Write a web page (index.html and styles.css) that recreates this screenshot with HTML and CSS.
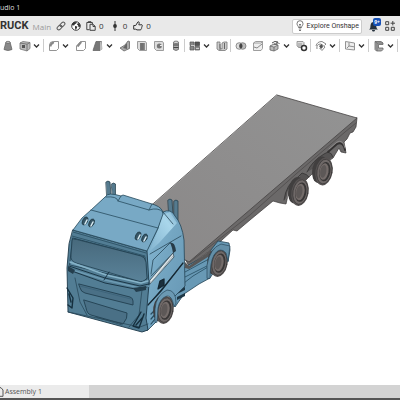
FILE: index.html
```
<!DOCTYPE html>
<html lang="en">
<head>
<meta charset="utf-8">
<title>Part Studio 1</title>
<link rel="stylesheet" href="styles.css">
</head>
<body>
<svg class="defs" aria-hidden="true">
  <defs>
    <symbol id="caret" viewBox="0 0 7 12"><path d="M1 4.500 3.500 7 6 4.500" fill="none" stroke="#333" stroke-width="1.300"/></symbol>
    <linearGradient id="deck" x1="0" y1="1" x2="1" y2="0"><stop offset="0" stop-color="#8a8888"/><stop offset="1" stop-color="#939393"/></linearGradient>
    <linearGradient id="side" x1="0" y1="0" x2="1" y2="1"><stop offset="0" stop-color="#8cbdd8"/><stop offset=".45" stop-color="#74a6c2"/><stop offset="1" stop-color="#6595b2"/></linearGradient>
    <linearGradient id="glass" x1="0" y1="0" x2="0" y2="1"><stop offset="0" stop-color="#47697c"/><stop offset="1" stop-color="#5a8299"/></linearGradient>
    <linearGradient id="facet" x1="0" y1="1" x2="1" y2="0"><stop offset="0" stop-color="#82b3ce"/><stop offset=".7" stop-color="#a9d6eb"/><stop offset="1" stop-color="#82b3ce"/></linearGradient>
    <g id="wheel">
      <ellipse cx="-4" cy="-1" rx="8" ry="13.500" fill="#413f3f"/>
      <ellipse rx="8.600" ry="14" fill="#575353"/>
      <ellipse cx=".4" rx="7.400" ry="12.400" fill="#6f6968" stroke="#343232" stroke-width=".6"/>
      <ellipse cx=".8" rx="5.600" ry="9.800" fill="#383636"/>
      <ellipse rx="4.500" ry="8.400" fill="#746c6a"/>
      <ellipse cx="-.7" rx="3" ry="6.400" fill="#5d5857"/>
    </g>
  </defs>
</svg>

<div class="titlebar">udio 1</div>

<header class="header">
  <h1 class="doc-name">RUCK</h1>
  <span class="branch">Main</span>
  <button class="action" aria-label="Link"><svg width="10" height="10" viewBox="0 0 10 10"><g fill="none" stroke="#555" transform="rotate(-45 5 5)"><rect x=".2" y="3.300" width="5.400" height="3.400" rx="1.700"/><rect x="4.400" y="3.300" width="5.400" height="3.400" rx="1.700"/></g></svg></button>
  <button class="action" aria-label="Public"><svg width="10" height="10" viewBox="0 0 10 10"><circle cx="5" cy="5" r="4.300" fill="#fff" stroke="#333" stroke-width=".9"/><path d="M1 3 3 1l3 .2-.8 1.300-1.400.7-.6 1.400L1 4.300zM4 5l2.400.6-.6 1.700-1.200 1.600L4 7zM6.500 2.400 8.300 2l1 2.500-.8 2-1-.5-.5-1.700-1-.6z" fill="#333"/></svg></button>
  <button class="action count"><svg width="10" height="10" viewBox="0 0 10 10"><path d="M3.500 8.700H.8V1.500h5.600V3M2.200 1.500V.7H5v.8M4 3.300h3.200l2 2v4H4zM7 3.500v2h2" fill="none" stroke="#444"/></svg><span>0</span></button>
  <button class="action count"><svg width="10" height="10" viewBox="0 0 10 10"><path d="M5 0v10" stroke="#333"/><circle cx="5" cy="5" r="1.900" fill="#333"/></svg><span>0</span></button>
  <button class="action count"><svg width="10" height="10" viewBox="0 0 10 10"><path d="M.7 4.500h2L5 .8c1.500-.2 1.500 1.200.8 3H9c.6.6.4 1 0 1.400.3.6.1 1-.3 1.300.2.7 0 1-.4 1.200 0 .8-.4 1.200-1.100 1.200H4L2.700 8.200H.7z" fill="none" stroke="#333"/></svg><span>0</span></button>
  <button class="explore"><svg width="8" height="12" viewBox="0 0 8 12"><path d="M2.500 7.500C2.500 6 1 5.500 1 3.700a3 3 0 0 1 6 0C7 5.500 5.500 6 5.500 7.500zM2.800 9h2.400M3 10.500h2M3 4l1 1 1-1M4 5v2.500" fill="none" stroke="#555" stroke-width=".8"/></svg><span>Explore Onshape</span></button>
  <button class="action bell" aria-label="Notifications"><svg width="10" height="12" viewBox="0 0 10 12"><path d="M0 9.500c1.500-1 1.300-2 1.500-4C1.700 3 3 2 4.500 2S7 3 7.200 5.500c.2 2 .3 3 1.800 4zM3 10h3c0 2-3 2-3 0z" fill="#26323d"/></svg><span class="badge">9+</span></button>
  <button class="action" aria-label="Apps"><svg width="10" height="10" viewBox="0 0 10 10"><path d="M.7.7h3v3h-3zM.7 6.300h3v3h-3zM6.300 6.300h3v3h-3zM7.800 0v4.400M5.600 2.200H10" fill="none" stroke="#444"/></svg></button>
</header>

<nav class="toolbar" aria-label="Features">
  <button class="tool" aria-label="Loft"><svg viewBox="0 0 12 12"><path d="M4 2h4l2 7.500Q6 11.500 2 9.500z" fill="#888" stroke="#666" stroke-width=".8"/><ellipse cx="6" cy="2.300" rx="2" ry="1" fill="#ccc" stroke="#555" stroke-width=".6"/></svg></button>
  <button class="tool" aria-label="Thicken"><svg viewBox="0 0 12 12"><path d="M1 3 4 1.500l7 1v6L8 11 1 9z" fill="#bbb" stroke="#777" stroke-width=".8"/><path d="m1 3 7 1.200L11 2.500M8 4.200V11" fill="none" stroke="#666" stroke-width=".8"/><path d="M3 5h3v3H3z" fill="#555"/></svg></button>
  <button class="drop" aria-label="More"><svg><use href="#caret"/></svg></button>
  <span class="sep"></span>
  <button class="tool" aria-label="Fillet"><svg viewBox="0 0 12 12"><path d="M1.500 10.500V5q0-3.500 4-3.500h5v7l-2 2z" fill="#fff" stroke="#888" stroke-width=".9"/><path d="M1.500 6.500q0-5 5-5l-1 2.500q-2 0-2 2.500z" fill="#888"/></svg></button>
  <button class="drop" aria-label="More"><svg><use href="#caret"/></svg></button>
  <button class="tool" aria-label="Chamfer"><svg viewBox="0 0 12 12"><path d="M1.500 10.500V6l4-4.500h5v7l-2 2z" fill="#fff" stroke="#888" stroke-width=".9"/><path d="m1.500 6 4-4.500 1.500 1L3.500 7z" fill="#888"/></svg></button>
  <button class="tool" aria-label="Draft"><svg viewBox="0 0 12 12"><path d="M4 1.500h5.500V9L8 10.500H1z" fill="#777" stroke="#666" stroke-width=".8"/><path d="m8 2 1.500-.5 1 7.500L8 10.500z" fill="#bbb"/></svg></button>
  <button class="drop" aria-label="More"><svg><use href="#caret"/></svg></button>
  <button class="tool" aria-label="Rib"><svg viewBox="0 0 12 12"><path d="m1 8 5-3 3-4 1.500.5v7L5 11z" fill="#aaa" stroke="#666" stroke-width=".8"/><path d="M4 8 8 3v6z" fill="#666"/></svg></button>
  <button class="tool" aria-label="Shell"><svg viewBox="0 0 12 12"><path d="M1.500 1.500h8l1 1.500v7.500h-7l-2-2z" fill="#ddd" stroke="#888" stroke-width=".8"/><path d="M4 3h4v7H4z" fill="#777"/><path d="M6 3v7M8.500 3v7" stroke="#666" stroke-width=".7"/></svg></button>
  <button class="tool" aria-label="Hole"><svg viewBox="0 0 12 12"><path d="M1.500 1.500h8l1 1.500v7.500h-7l-2-2z" fill="#ddd" stroke="#888" stroke-width=".8"/><circle cx="6.300" cy="6" r="2.500" fill="#777"/><path d="M7 5.500h2" stroke="#eee"/></svg></button>
  <button class="tool" aria-label="Thread"><svg viewBox="0 0 12 12"><path d="M3.500 2.500v7q2.500 2 5 0v-7z" fill="#aaa" stroke="#666" stroke-width=".8"/><ellipse cx="6" cy="2.300" rx="2.500" ry="1.200" fill="#ddd" stroke="#666" stroke-width=".8"/><path d="M3.500 5h5M3.500 7.500h5" stroke="#444"/></svg></button>
  <span class="sep"></span>
  <button class="tool" aria-label="Pattern"><svg viewBox="0 0 12 12"><path d="M1 2h4v3.500H1zM1 6.500h4V10H1zM6 6.500h4.500V10H6z" fill="#888" stroke="#555" stroke-width=".7"/><path d="M6 2h4.500v3.500H6z" fill="#555" stroke="#444" stroke-width=".7"/><path d="M2 5.500h3M7 8.500h3" stroke="#ccc"/></svg></button>
  <button class="drop" aria-label="More"><svg><use href="#caret"/></svg></button>
  <button class="tool" aria-label="Mirror"><svg viewBox="0 0 12 12"><path d="M1 2h3v6l2 1V3l2-1h3v7l-2 1.500H3L1 9z" fill="#ccc" stroke="#777" stroke-width=".8"/><path d="M4 4v6M8.500 3v6" stroke="#666"/></svg></button>
  <span class="sep"></span>
  <button class="tool" aria-label="Boolean"><svg viewBox="0 0 12 12"><circle cx="4.300" cy="6" r="3.300" fill="#ddd" stroke="#777" stroke-width=".8"/><circle cx="7.700" cy="6" r="3.300" fill="#bbb" stroke="#777" stroke-width=".8"/><path d="M6 3.200a3.300 3.300 0 0 1 0 5.600 3.300 3.300 0 0 1 0-5.600z" fill="#444"/></svg></button>
  <button class="tool" aria-label="Split"><svg viewBox="0 0 12 12"><path d="M1.500 3 3.500 1.500h7v7L9 10.500H1.500zM1.500 3h7.500l1.500-1.500" fill="#eee" stroke="#888" stroke-width=".8"/><path d="m2 7 3 1 5-4" fill="none" stroke="#888"/></svg></button>
  <button class="tool" aria-label="Transform"><svg viewBox="0 0 12 12"><path d="m1 6 4-2 4 1v4l-4 2-4-1zM1 6l4 1 4-2M5 7v4" fill="#bbb" stroke="#666" stroke-width=".8"/><path d="M3 3q3-3 6-.5L10.500 4M8 1v3H5" fill="none" stroke="#555"/></svg></button>
  <button class="drop" aria-label="More"><svg><use href="#caret"/></svg></button>
  <button class="tool" aria-label="Delete part"><svg viewBox="0 0 12 12"><path d="M1 1.500h6l1 1v5H3L1 6zM3 3v5M5 3v5" fill="#ddd" stroke="#888" stroke-width=".8"/><circle cx="8" cy="8" r="2.500" fill="#fff" stroke="#333" stroke-width="1.500"/></svg></button>
  <span class="sep"></span>
  <button class="tool" aria-label="Modify face"><svg viewBox="0 0 12 12"><path d="M1 6q1-4.500 6-4.500L11 4 9.500 5.500M2 9q-1-5 4-5l4 3-3 3.500L4.500 8" fill="none" stroke="#888"/><path d="m4 6 3-2 1 3-2 2z" fill="#555"/></svg></button>
  <button class="drop" aria-label="More"><svg><use href="#caret"/></svg></button>
  <span class="sep"></span>
  <button class="tool" aria-label="Plane"><svg viewBox="0 0 12 12"><path d="m1.500 1.500 9 1.500v7l-9-1z" fill="#eee" stroke="#888" stroke-width=".9"/><path d="M5 2.500V6l5 .8M3 8l2-2" fill="none" stroke="#777" stroke-width=".8"/></svg></button>
  <button class="drop" aria-label="More"><svg><use href="#caret"/></svg></button>
  <span class="sep"></span>
  <button class="tool" aria-label="Sheet metal"><svg viewBox="0 0 12 12"><path d="M2 1.500h6L10 3v1.500H5.500V8H10v1.500L8.500 11h-5L2 9.500z" fill="#aaa" stroke="#666" stroke-width=".8"/><path d="m2 1.500 2 1.500v8M4 3h6" fill="none" stroke="#666" stroke-width=".8"/></svg></button>
  <button class="drop" aria-label="More"><svg><use href="#caret"/></svg></button>
  <span class="sep"></span>
</nav>

<main class="viewport">
  <svg class="model" viewBox="0 55 400 330" role="img" aria-label="Truck model">
    <g stroke-linejoin="round" stroke-linecap="round">
      <!-- trailer side and running gear -->
      <path d="M357 118 356 127 353 132 350 133 347 139 344 142 346 153 341 152 339 148 333 158 318 168 306 180 290 186 286 204 280 203 273 201 250 220 237 231 233 230 211 250 189 266 185 259Z" fill="#6b6969" stroke="#393737" stroke-width=".7"/>
      <path d="m190 262 60-47 46-41 49-42 11-9" fill="none" stroke="#4a4848" stroke-width=".7"/>
      <path d="M284 200Q286 184 298 177L302 173Q307 174 309 177M307 172Q312 161 324 154L328 152Q332 153 333 157" fill="#555353" stroke="#353333" stroke-width=".8"/>
      <path d="M328 152 337 144Q343 141 345 150" fill="none" stroke="#343232" stroke-width="1.800"/>
      <path d="M287 198Q288 184 299 177M329 149 337 142Q343 139 345 148" fill="none" stroke="#918f8f" stroke-width=".9"/>
      <use href="#wheel" transform="translate(324 171.500) rotate(10)"/>
      <use href="#wheel" transform="translate(300 192) rotate(10)"/>
      <path d="M277 95 357 118 189 262 178 256 150 207Z" fill="url(#deck)" stroke="#454343" stroke-width=".8"/>
      <!-- tractor chassis -->
      <path d="M183 268 207 255 218 241 229 243 230 250 228 262 222 260 210 278 199 284 184 294 175 307 170 297Z" fill="#6899b5" stroke="#234354" stroke-width=".8"/>
      <path d="m185 272 24-13m-24 18 24-12m-25 18 9-7 15-9" fill="none" stroke="#264c61" stroke-width=".8"/>
      <path d="M185 262 189 266 211 250 211 255 189 269 185 268Z" fill="#595757"/>
      <path d="m177 291 8-4v3l-8 4zm0 6 8-4v3l-8 4zm2-12 6-3v3l-6 3z" fill="#1e3745"/>
      <use href="#wheel" transform="translate(219 263) rotate(10)"/>
      <path d="M207 278V265Q210 248 221 244L230 246 228 261 226 253Q220 246 214 255 210 262 210 278Z" fill="#638fa8" stroke="#29495b" stroke-width=".7"/>
      <!-- roof antennas -->
      <g fill="#557a8e" stroke="#203946" stroke-width=".7">
        <path d="M106 182q2-2 4 0l1 13-4 1zM111.500 184q2-2 4 0v12l-3-1zM168 200q2-2 4 0l1 15-4-1zM174 201q2-2 4 0v20l-4-4z"/>
      </g>
      <!-- cab side -->
      <path d="M163 212Q171 208 175 216 182 224 184 240L185 286 175 296 169 292 160 299 156 322 148 330 143 331 146 252 158 228Z" fill="url(#side)" stroke="#254455" stroke-width=".8"/>
      <path d="M162 215 170 212 177 223 159 243 149 252 158 230Z" fill="url(#facet)"/>
      <path d="M150 254 181 236M151 274 153 260 170 243Q176 244 175 251L151 276M163 212 173 224" fill="none" stroke="#29495b" stroke-width=".8"/>
      <path d="m170 242 4 2 2 7-3 2-1-5z" fill="#273b47"/>
      <path d="m150 280 23-27 1 4-24 27z" fill="#dce4e7" stroke="#344955" stroke-width=".8"/>
      <path d="m151 283 22-27" stroke="#8798a0" stroke-width=".7"/>
      <path d="m148 305 13-14 22-28M158 289l2-8 4-2v6z" fill="#1c303d" stroke="#152732" stroke-width="1.300"/>
      <path d="m151 319 6-7m-6 2 6-6m-6 16 4-5" stroke="#274c60" stroke-width="1.200"/>
      <!-- front face -->
      <path d="M73 230 147 251 149 284 146 318 148 330 142 332 68 312 67 268 69 244Z" fill="#527d94" stroke="#1d3949" stroke-width=".9"/>
      <path d="M73 238 145 257 147 279 139 281 70 265Z" fill="#628fa8" stroke="#203e4e" stroke-width=".8"/>
      <path d="M75 239 141 256Q145 257 146 262L147 278Q143 283 138 281L76 263Q70 261 71 255L72 241Q72 238 75 239Z" fill="url(#glass)" stroke="#203e4e" stroke-width=".8"/>
      <path d="m70 262 36 13 35 8 7-2" fill="none" stroke="#86b3c8" stroke-width="1.500"/>
      <path d="M69 269l36 11 35 8 9-2" fill="none" stroke="#6c9ab2" stroke-width="1.500"/>
      <path d="m69 266 36 12 35 8 9-2M69 270l36 13 30 6 12-2M104 280l5-8" fill="none" stroke="#152f3e" stroke-width=".9"/>
      <path d="m68 266 7 4-2 4-5-3zM133 288l13-2v4l-10 2z" fill="#243e4d"/>
      <path d="m79 284 51 13q3 1 3 4v4l-48-12q-4-1-5-5zM84 300l43 13q1 5-4 11l-32-9q-4-1-5-7z" fill="#4a7086" stroke="#213f50" stroke-width=".9"/>
      <path d="m80 286 51 13" fill="none" stroke="#3b6278" stroke-width=".8"/>
      <path d="m75 278 5 24 7 13M142 290l-3 25-10 12M68 312l72 15 8-3M96 317l26 8" fill="none" stroke="#29495b" stroke-width=".8"/>
      <path d="m67 288 6 10-1 10-4-3M69 294l2 8m70 10-8 14 6 2 5-14m-1 3-7 8" fill="none" stroke="#152f3e" stroke-width="1.400"/>
      <!-- roof -->
      <path d="M106 196Q108 192 121 196L123 195 152 204 155 205Q163 208 163 214L158 228 147 251 73 230 82 218 91 210Z" fill="#78a9c5" stroke="#254759" stroke-width=".8"/>
      <path d="M91 210 158 228M106 197Q117 196 118 201L149 210Q158 207 163 212M118 201l3-5M149 210l3-6M73 232l73 21M72 236l73 20" fill="none" stroke="#284c5f" stroke-width=".8"/>
      <g fill="#365565" stroke="#1c3440" stroke-width=".7">
        <ellipse cx="85" cy="221" rx="2.400" ry="4.300" transform="rotate(25 85 221)"/><ellipse cx="91.500" cy="223" rx="2.400" ry="4.300" transform="rotate(25 91.500 223)"/>
        <ellipse cx="138" cy="236" rx="2.400" ry="4.300" transform="rotate(25 138 236)"/><ellipse cx="144.500" cy="238" rx="2.400" ry="4.300" transform="rotate(25 144.500 238)"/>
      </g>
      <path d="m85 224 2-4m4 6 2-4m45 17 2-4m4 6 2-4" stroke="#d0e4ec" stroke-width="1.600"/>
      <!-- front wheel and arch -->
      <use href="#wheel" transform="translate(165 310) rotate(10)"/>
      <path d="M155 322V309Q156 295 167 290 176 290 176 303L174 307Q172 295 167 296 160 298 158 308L157 322Z" fill="#6b99b3" stroke="#29495b" stroke-width=".7"/>
    </g>
  </svg>
</main>

<footer class="tabs">
  <button class="tab"><svg width="5" height="10" viewBox="0 0 5 10"><path d="M0 .7h1L3 3v6.300H0" fill="none" stroke="#555"/></svg><span>Assembly 1</span></button>
</footer>
</body>
</html>
```
FILE: styles.css
```
* {
  box-sizing: border-box;
}

body {
  display: flex;
  flex-direction: column;
  min-height: 100vh;
  margin: 0;
  overflow: hidden;
  background: #fff;
  color: #333;
  font: 8px/12px "Open Sans", "Noto Sans", sans-serif;
}

button {
  margin: 0;
  padding: 0;
  border: 0;
  background: none;
  color: inherit;
  font: inherit;
}

svg {
  display: block;
  flex: none;
}

.defs {
  position: absolute;
  width: 0;
  height: 0;
}

.titlebar {
  height: 16px;
  padding-top: 2px;
  background: #000;
  color: #ddd;
  font-size: 7px;
}

.header {
  display: flex;
  align-items: center;
  gap: 5px;
  height: 20px;
  padding-right: 5px;
  background: #e9e9e9;
}

.doc-name {
  margin: 0 -1px 0 0;
  font-family: Roboto, "Open Sans", sans-serif;
  font-size: 11px;
  line-height: 20px;
}

.branch {
  padding-top: 2px;
  color: #999;
  font-size: 8px;
}

.action {
  display: flex;
  align-items: center;
  position: relative;
}

.count {
  gap: 3px;
  margin-right: 1px;
}

.explore {
  display: flex;
  align-items: center;
  gap: 3px;
  height: 15px;
  margin-left: auto;
  padding: 0 2px 0 3px;
  border: 1px solid #ccc;
  border-radius: 2px;
  background: #fff;
  font-family: Roboto, "Open Sans", sans-serif;
  font-size: 7px;
  white-space: nowrap;
}

.bell {
  margin: 0 1px 0 2px;
}

.badge {
  position: absolute;
  top: -2px;
  left: 4px;
  width: 8px;
  height: 8px;
  border-radius: 2px;
  background: #1550b5;
  color: #fff;
  font-size: 5px;
  font-weight: 700;
  line-height: 8px;
}

.toolbar {
  display: flex;
  align-items: center;
  height: 19px;
  margin-left: -1px;
}

.tool {
  display: flex;
  flex: none;
  justify-content: center;
  width: 17px;
}

.tool svg {
  width: 12px;
  height: 12px;
}

.drop {
  flex: none;
  width: 10px;
}

.drop svg {
  width: 7px;
  height: 12px;
}

.sep {
  flex: none;
  width: 2px;
  height: 13px;
  border-left: 1px solid #ccc;
}

.viewport {
  display: flex;
  flex: 1;
  min-height: 0;
}

.model {
  width: 100%;
}

.tabs {
  display: flex;
  height: 15px;
  border-bottom: 2px solid #555;
  background: #d3d3d3;
}

.tab {
  display: flex;
  align-items: center;
  flex: 0 0 89px;
  background: #ebebeb;
  color: #555;
  font-size: 7px;
}
```
